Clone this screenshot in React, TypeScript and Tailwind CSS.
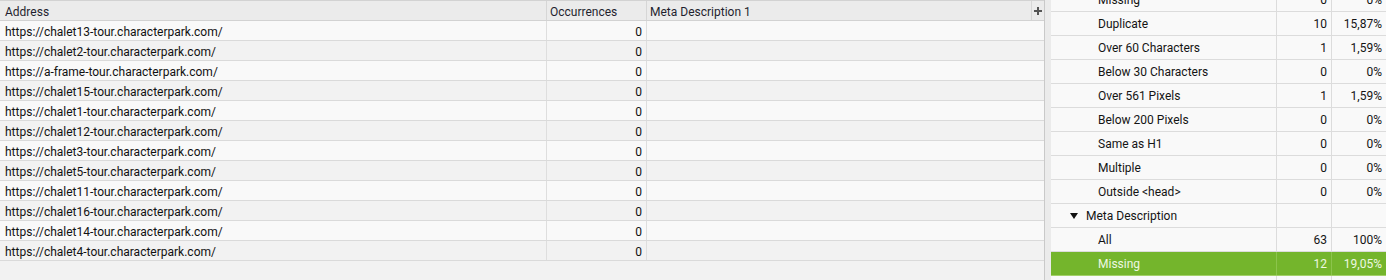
import React from 'react';

const urls = [
  'https://chalet13-tour.characterpark.com/',
  'https://chalet2-tour.characterpark.com/',
  'https://a-frame-tour.characterpark.com/',
  'https://chalet15-tour.characterpark.com/',
  'https://chalet1-tour.characterpark.com/',
  'https://chalet12-tour.characterpark.com/',
  'https://chalet3-tour.characterpark.com/',
  'https://chalet5-tour.characterpark.com/',
  'https://chalet11-tour.characterpark.com/',
  'https://chalet16-tour.characterpark.com/',
  'https://chalet14-tour.characterpark.com/',
  'https://chalet4-tour.characterpark.com/',
];

type Stat = { label: string; count?: string; pct?: string; group?: boolean; active?: boolean };

const stats: Stat[] = [
  { label: 'Missing', count: '0', pct: '0%' },
  { label: 'Duplicate', count: '10', pct: '15,87%' },
  { label: 'Over 60 Characters', count: '1', pct: '1,59%' },
  { label: 'Below 30 Characters', count: '0', pct: '0%' },
  { label: 'Over 561 Pixels', count: '1', pct: '1,59%' },
  { label: 'Below 200 Pixels', count: '0', pct: '0%' },
  { label: 'Same as H1', count: '0', pct: '0%' },
  { label: 'Multiple', count: '0', pct: '0%' },
  { label: 'Outside <head>', count: '0', pct: '0%' },
  { label: 'Meta Description', group: true },
  { label: 'All', count: '63', pct: '100%' },
  { label: 'Missing', count: '12', pct: '19,05%', active: true },
  { label: '', count: '', pct: '' },
];

const UrlTable = () => (
  <div className="flex w-[1045px] shrink-0 flex-col border-r border-[#c9c9c9] bg-[#f2f2f2]">
    <div className="flex h-[21px] border-y border-[#d2d2d2] bg-[#ebebeb] text-[#1f1f2e]">
      <div className="w-[547px] border-r border-[#d6d6d6] pl-[5px] pt-[2px] leading-[18px]">Address</div>
      <div className="w-[100px] border-r border-[#d6d6d6] pl-[3px] pt-[2px] leading-[18px]">Occurrences</div>
      <div className="w-[385px] border-r border-[#d6d6d6] pl-[3px] pt-[2px] leading-[18px]">Meta Description 1</div>
      <div className="flex flex-1 items-center justify-center">
        <svg width="8" height="8" viewBox="0 0 8 8">
          <path d="M3 0h2v3h3v2H5v3H3V5H0V3h3z" fill="#555" />
        </svg>
      </div>
    </div>
    {urls.map((u, i) => (
      <div
        key={u}
        className={`flex h-[20px] overflow-hidden border-b border-[#dadada] text-[#111] ${i % 2 === 0 ? 'bg-[#f9f9f9]' : 'bg-[#f2f2f2]'}`}
      >
        <div className="w-[547px] border-r border-[#dedede] pl-[5px] pt-[2px] leading-[18px]">{u}</div>
        <div className="w-[100px] border-r border-[#dedede] pr-[4px] pt-[2px] text-right leading-[18px]">0</div>
        <div className="flex-1" />
      </div>
    ))}
  </div>
);

const StatsPanel = () => (
  <div className="flex-1 overflow-hidden bg-[#f9f9f9]">
    <div className="-mt-[12px]">
      {stats.map((s, i) => (
        <div
          key={i}
          className={`flex h-[24px] border-b ${
            s.active ? 'border-[#a3d068] bg-[#74b52c] text-[#eef8e2]' : 'border-[#dcdcdc] text-[#141414]'
          }`}
        >
          <div
            className={`flex w-[226px] items-center border-r ${s.active ? 'border-[#8cc44c]' : 'border-[#dcdcdc]'} ${
              s.group ? 'pl-[19px]' : 'pl-[47px]'
            }`}
          >
            {s.group && (
              <svg width="8" height="6" viewBox="0 0 8 6" className="mr-[8px]">
                <path d="M0 0h8L4 6z" fill="#111" />
              </svg>
            )}
            {s.label}
          </div>
          <div
            className={`flex w-[55px] items-center justify-end border-r pr-[4px] ${
              s.active ? 'border-[#8cc44c]' : 'border-[#dcdcdc]'
            }`}
          >
            {s.count}
          </div>
          <div className="flex flex-1 items-center justify-end pr-[4px]">{s.pct}</div>
        </div>
      ))}
    </div>
  </div>
);

export default function App() {
  return (
    <div className="flex h-[280px] w-[1386px] overflow-hidden bg-[#f2f2f2] font-['Roboto',sans-serif] text-[12px]">
      <UrlTable />
      <div className="w-[6px] shrink-0 bg-[#ebebeb]" />
      <StatsPanel />
    </div>
  );
}
